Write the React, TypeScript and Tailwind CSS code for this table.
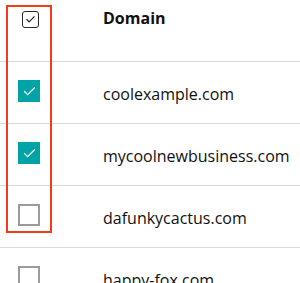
import { Check } from 'lucide-react'

interface IDomain {
  name: string
  selected: boolean
}

const domains: IDomain[] = [
  { name: 'coolexample.com', selected: true },
  { name: 'mycoolnewbusiness.com', selected: true },
  { name: 'dafunkycactus.com', selected: false },
  { name: 'happy-fox.com', selected: false },
]

function RowCheckbox({ checked }: { checked: boolean }) {
  if (checked) {
    return (
      <span className="flex items-center justify-center w-[22px] h-[22px] bg-[#00a4a6]">
        <Check className="w-[15px] h-[15px] text-white" strokeWidth={2} />
      </span>
    )
  }
  return (
    <span className="block w-[22px] h-[22px] border-2 border-[#9b9b9b] bg-white" />
  )
}

export default function App() {
  return (
    <div
      className="relative w-[300px] h-[283px] overflow-hidden bg-white text-[#111111]"
      style={{ fontFamily: '"Open Sans", "Liberation Sans", sans-serif' }}
    >
      <div className="flex h-[62px] border-b border-[#d5dae0]">
        <div className="w-[103px] pl-[22px] pt-[11px]">
          <span className="flex items-center justify-center w-[17px] h-[17px] border-[1.5px] border-[#2a2a2a] rounded-[3px]">
            <Check className="w-[11px] h-[11px] text-[#2a2a2a]" strokeWidth={2.5} />
          </span>
        </div>
        <div className="pt-[6px] text-[16px] leading-6 font-bold">Domain</div>
      </div>

      {domains.map((domain) => (
        <div key={domain.name} className="flex h-[62px] border-b border-[#d5dae0]">
          <div className="w-[103px] pl-[18px] pt-[18px]">
            <RowCheckbox checked={domain.selected} />
          </div>
          <div className="pt-[20px] text-[16px] leading-6">{domain.name}</div>
        </div>
      ))}

      {/* highlight around the select column */}
      <div className="absolute left-[6px] top-[5px] w-[46px] h-[228px] border-2 border-[#f23c17]" />
    </div>
  )
}
